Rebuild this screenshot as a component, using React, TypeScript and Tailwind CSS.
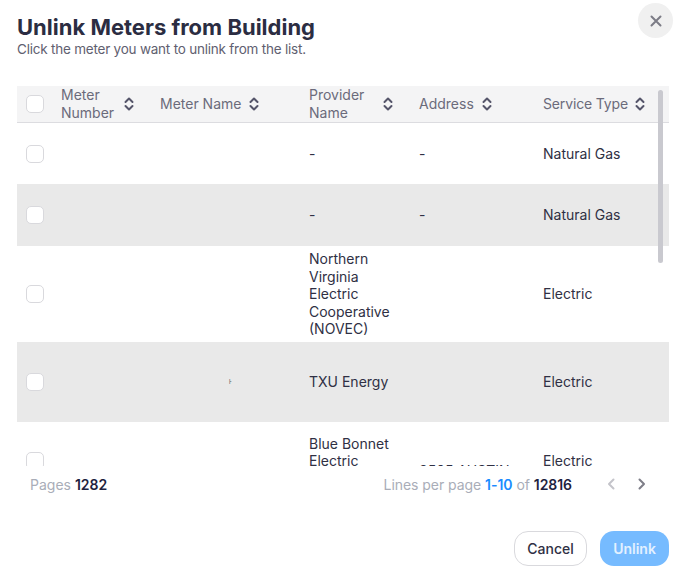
import React from "react";

function Sort() {
  return (
    <svg width="12" height="16" viewBox="0 0 12 16" fill="none" stroke="#55556a" strokeWidth="2" strokeLinecap="round" strokeLinejoin="round" className="shrink-0">
      <path d="M2.5 6L6 2.5 9.5 6" />
      <path d="M2.5 10L6 13.5 9.5 10" />
    </svg>
  );
}

function Box() {
  return <div className="ml-[9px] h-[18px] w-[18px] rounded-[5px] border border-[#d9d9dd] bg-white" />;
}

const cols = "grid grid-cols-[44px_99px_149px_110px_124px_1fr] items-center";

function Row({ h, alt, children }: { h: string; alt?: boolean; children: React.ReactNode }) {
  return (
    <div className={`${cols} ${h} shrink-0 ${alt ? "bg-[#e9e9e9]" : "bg-white"} text-[14px] leading-[17.5px] text-[#2f3044]`}>
      <Box />
      {children}
    </div>
  );
}

export default function App() {
  return (
    <div className="relative h-[567px] w-[679px] overflow-hidden bg-white font-['Inter',sans-serif]">
      <button className="absolute left-[638px] top-[3px] flex h-[35px] w-[35px] items-center justify-center rounded-full bg-[#f0f0f0]">
        <svg width="12" height="12" viewBox="0 0 12 12" fill="none" stroke="#7c7c86" strokeWidth="2" strokeLinecap="round">
          <path d="M1.5 1.5l9 9M10.5 1.5l-9 9" />
        </svg>
      </button>

      <div className="flex flex-col px-[17px] pr-[10px]">
        <h1 className="mt-[14px] text-[22px] font-bold leading-[27px] text-[#2b2d42]">Unlink Meters from Building</h1>
        <p className="text-[13.5px] leading-[16px] tracking-[-0.22px] text-[#5f6070]">Click the meter you want to unlink from the list.</p>

        <div className="relative mt-[29px] flex h-[380px] flex-col overflow-hidden">
          <div className={`${cols} h-[37px] shrink-0 border-b border-[#dcdce0] bg-[#f4f4f5] text-[14px] leading-[18px] text-[#6b6b7b]`}>
            <Box />
            <div className="flex items-center gap-[9px]"><span>Meter<br />Number</span><Sort /></div>
            <div className="flex items-center gap-[7px]"><span>Meter Name</span><Sort /></div>
            <div className="flex items-center gap-[15px]"><span className="w-[58px]">Provider<br />Name</span><Sort /></div>
            <div className="flex items-center gap-[7px]"><span>Address</span><Sort /></div>
            <div className="flex items-center gap-[6px]"><span className="tracking-[-0.15px]">Service Type</span><Sort /></div>
          </div>

          <Row h="h-[61px]"><div /><div /><div>-</div><div>-</div><div>Natural Gas</div></Row>
          <Row h="h-[62px]" alt><div /><div /><div>-</div><div>-</div><div>Natural Gas</div></Row>
          <Row h="h-[96px]"><div /><div /><div className="pr-2">Northern<br />Virginia<br />Electric<br />Cooperative<br />(NOVEC)</div><div /><div>Electric</div></Row>
          <Row h="h-[80px]" alt>
            <div />
            <div className="pl-[69px] text-[6px] leading-[6px] text-[#555555]">ŀ</div>
            <div>TXU Energy</div><div /><div>Electric</div>
          </Row>
          <Row h="h-[78px]">
            <div /><div />
            <div>Blue Bonnet<br />Electric<br />Cooperative</div>
            <div className="pt-[20px] whitespace-nowrap">3505 AUSTIN</div>
            <div>Electric</div>
          </Row>

          <div className="absolute left-[641px] top-[4px] h-[173px] w-[5px] rounded-full bg-[#c9c9cf]" />
        </div>

        <div className="mt-[8px] flex h-[20px] items-center justify-between pl-[13px] text-[14px]">
          <div className="text-[#a9adb8]">Pages <span className="font-semibold text-[#1e2240]">1282</span></div>
          <div className="flex items-center">
            <span className="tracking-[-0.05px] text-[#a9adb8]">Lines per page <span className="font-semibold text-[#1a8cff]">1-10</span> of <span className="font-semibold text-[#1e2240]">12816</span></span>
            <div className="ml-[35px] mr-[23px] flex items-center gap-[21px]">
              <svg width="9" height="12" viewBox="0 0 9 12" fill="none" stroke="#c4c4ca" strokeWidth="2" strokeLinecap="round" strokeLinejoin="round"><path d="M6.5 1.5L2 6l4.5 4.5" /></svg>
              <svg width="9" height="12" viewBox="0 0 9 12" fill="none" stroke="#7e7e88" strokeWidth="2" strokeLinecap="round" strokeLinejoin="round"><path d="M2.5 1.5L7 6l-4.5 4.5" /></svg>
            </div>
          </div>
        </div>

        <div className="mt-[37px] flex justify-end gap-[13px]">
          <button className="h-[35px] w-[73px] rounded-[14px] border border-[#d9d9dd] bg-white text-[14px] font-medium text-[#2f3044]">Cancel</button>
          <button className="h-[35px] w-[69px] rounded-[14px] bg-[#76bbff] text-[14px] font-semibold text-[#e3f1ff]">Unlink</button>
        </div>
      </div>
    </div>
  );
}
